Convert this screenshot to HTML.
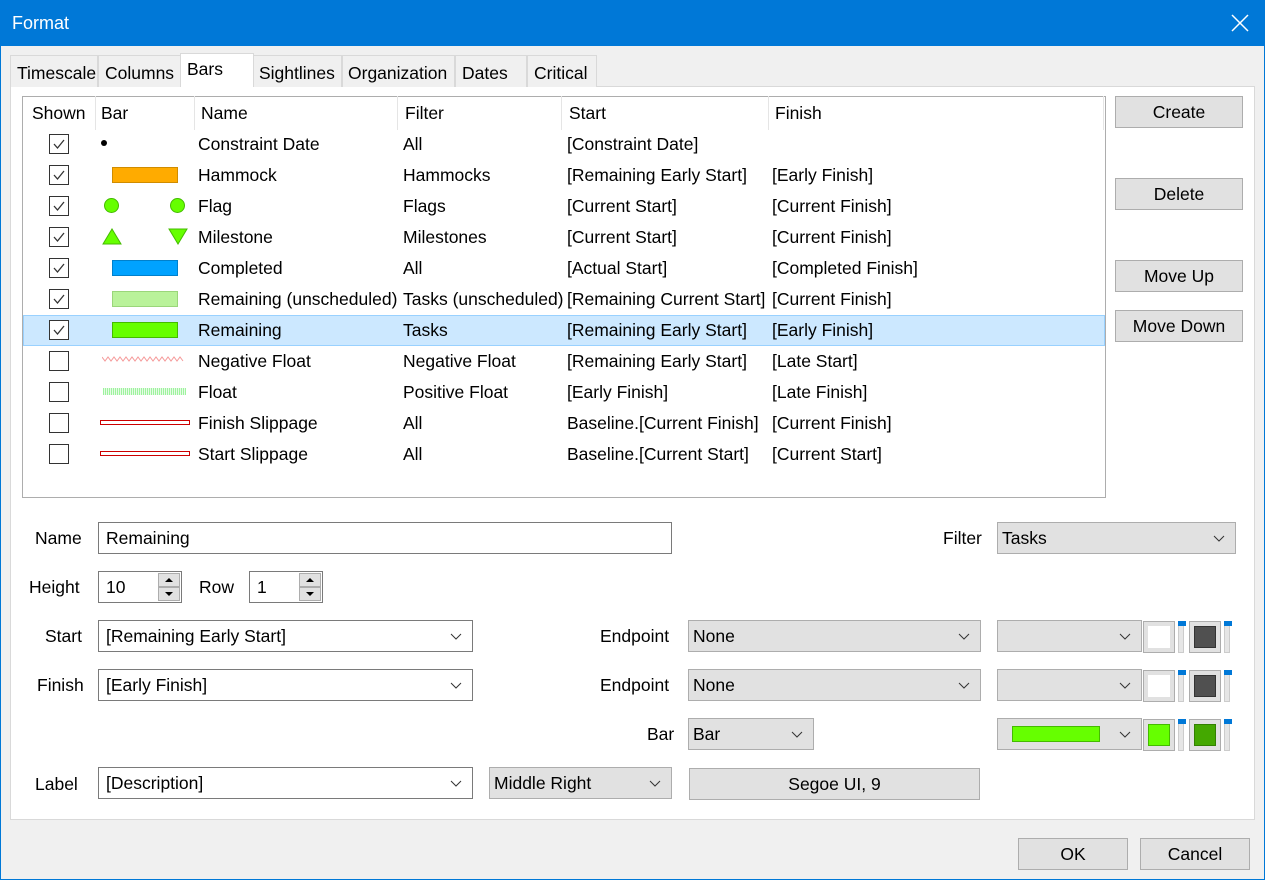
<!DOCTYPE html>
<html><head><style>
*{box-sizing:border-box;margin:0;padding:0}
body{width:1265px;height:880px;background:#f0f0f0;font-family:"Liberation Sans",sans-serif;font-size:17.5px;color:#000;position:relative;overflow:hidden}
.a{position:absolute}
.win{left:0;top:0;width:1265px;height:880px;border:1px solid #0078d7}
.title{left:0;top:0;width:1265px;height:46px;background:#0078d7;color:#fff;font-size:18px;padding:13px 12px}
.tab{top:55px;height:32px;border:1px solid #d9d9d9;border-bottom:none;background:#f0f0f0;padding:7px 6px;font-size:17.5px;white-space:nowrap}
.panel{left:10px;top:86px;width:1245px;height:734px;background:#fff;border:1px solid #d9d9d9}
.list{left:22px;top:96px;width:1084px;height:402px;border:1px solid #adadad;background:#fff}
.hd{top:103px}
.sep{top:96px;width:1px;height:34px;background:#e5e5e5}
.cb{width:20px;height:20px;border:1px solid #333;background:#fff}
.btn{background:#e1e1e1;border:1px solid #adadad;text-align:center;padding-top:5px}
.inp{background:#fff;border:1px solid #7a7a7a;padding:5px 7px;height:32px}
.dd{background:#e1e1e1;border:1px solid #adadad;padding:5px 4px;height:32px}
.ddw{background:#fff;border:1px solid #7a7a7a;padding:5px 7px;height:32px}
.chev{position:absolute;right:10px;top:9px;width:12px;height:12px}
.sw{width:32px;height:32px;border:1px solid #adadad;background:#e1e1e1}
.sw i{position:absolute;left:4px;top:4px;width:22px;height:22px}
.sl{width:6px;height:32px;background:#e6e6e6;border:1px solid #ccc}
.sl i{position:absolute;left:-1px;top:-1px;width:8px;height:5px;background:#0078d7}
.col{top:129px;line-height:31px;white-space:nowrap}
</style></head><body>
<div class="a win"></div>
<div class="a title">Format</div>
<svg class="a" style="left:1231px;top:14px" width="18" height="18"><path d="M1 1L17 17M17 1L1 17" stroke="#fff" stroke-width="1.5"/></svg>
<div class="a panel"></div>
<div class="a tab" style="left:10px;width:88px;padding-left:6px">Timescale</div>
<div class="a tab" style="left:98px;width:83px;padding-left:6px">Columns</div>
<div class="a tab" style="left:253px;width:89px;padding-left:5px">Sightlines</div>
<div class="a tab" style="left:342px;width:113px;padding-left:5px">Organization</div>
<div class="a tab" style="left:455px;width:72px">Dates</div>
<div class="a tab" style="left:527px;width:70px">Critical</div>
<div class="a tab" style="left:180px;top:53px;width:74px;height:34px;background:#fff;padding-top:5px">Bars</div>
<div class="a list"></div>
<div class="a hd" style="left:32px">Shown</div>
<div class="a hd" style="left:101px">Bar</div>
<div class="a hd" style="left:201px">Name</div>
<div class="a hd" style="left:405px">Filter</div>
<div class="a hd" style="left:569px">Start</div>
<div class="a hd" style="left:775px">Finish</div>
<div class="a sep" style="left:95px"></div><div class="a sep" style="left:194px"></div><div class="a sep" style="left:397px"></div><div class="a sep" style="left:561px"></div><div class="a sep" style="left:768px"></div><div class="a sep" style="left:1103px"></div>
<div class="a" style="left:23px;top:315px;width:1082px;height:31px;background:#cce8ff;border:1px solid #99d1ff"></div>

<div class="a cb" style="left:49px;top:134px"></div><svg class="a" style="left:52px;top:137px" width="14" height="14"><path d="M2 7L5.5 11L12 3" stroke="#333" fill="none" stroke-width="1.3"/></svg>
<div class="a cb" style="left:49px;top:165px"></div><svg class="a" style="left:52px;top:168px" width="14" height="14"><path d="M2 7L5.5 11L12 3" stroke="#333" fill="none" stroke-width="1.3"/></svg>
<div class="a cb" style="left:49px;top:196px"></div><svg class="a" style="left:52px;top:199px" width="14" height="14"><path d="M2 7L5.5 11L12 3" stroke="#333" fill="none" stroke-width="1.3"/></svg>
<div class="a cb" style="left:49px;top:227px"></div><svg class="a" style="left:52px;top:230px" width="14" height="14"><path d="M2 7L5.5 11L12 3" stroke="#333" fill="none" stroke-width="1.3"/></svg>
<div class="a cb" style="left:49px;top:258px"></div><svg class="a" style="left:52px;top:261px" width="14" height="14"><path d="M2 7L5.5 11L12 3" stroke="#333" fill="none" stroke-width="1.3"/></svg>
<div class="a cb" style="left:49px;top:289px"></div><svg class="a" style="left:52px;top:292px" width="14" height="14"><path d="M2 7L5.5 11L12 3" stroke="#333" fill="none" stroke-width="1.3"/></svg>
<div class="a cb" style="left:49px;top:320px"></div><svg class="a" style="left:52px;top:323px" width="14" height="14"><path d="M2 7L5.5 11L12 3" stroke="#333" fill="none" stroke-width="1.3"/></svg>
<div class="a cb" style="left:49px;top:351px"></div>
<div class="a cb" style="left:49px;top:382px"></div>
<div class="a cb" style="left:49px;top:413px"></div>
<div class="a cb" style="left:49px;top:444px"></div>

<div class="a" style="left:101px;top:140px;width:6px;height:6px;border-radius:50%;background:#000"></div>
<div class="a" style="left:112px;top:167px;width:66px;height:16px;background:#ffab00;border:1px solid #d08c00"></div>
<div class="a" style="left:104px;top:198px;width:15px;height:15px;border-radius:50%;background:#66ff00;border:1px solid #44bb00"></div>
<div class="a" style="left:170px;top:198px;width:15px;height:15px;border-radius:50%;background:#66ff00;border:1px solid #44bb00"></div>
<svg class="a" style="left:102px;top:228px" width="86" height="18"><path d="M1 16L10 1L19 16Z" fill="#66ff00" stroke="#44bb00"/><path d="M67 1L85 1L76 16Z" fill="#66ff00" stroke="#44bb00"/></svg>
<div class="a" style="left:112px;top:260px;width:66px;height:16px;background:#00a2ff;border:1px solid #0080cc"></div>
<div class="a" style="left:112px;top:291px;width:66px;height:16px;background:#b9f29a;border:1px solid #9ad67a"></div>
<div class="a" style="left:112px;top:322px;width:66px;height:16px;background:#66ff00;border:1px solid #44bb00"></div>
<svg class="a" style="left:102px;top:355px" width="86" height="8"><path d="M0 2 l3 4 l3 -4 l3 4 l3 -4 l3 4 l3 -4 l3 4 l3 -4 l3 4 l3 -4 l3 4 l3 -4 l3 4 l3 -4 l3 4 l3 -4 l3 4 l3 -4 l3 4 l3 -4 l3 4 l3 -4 l3 4 l3 -4 l3 4 l3 -4 l3 4" stroke="#f59a9a" fill="none"/></svg>
<div class="a" style="left:103px;top:388px;width:83px;height:7px;background:repeating-linear-gradient(90deg,#9ef39e 0 1px,#e6fbe6 1px 2px)"></div>
<div class="a" style="left:100px;top:420px;width:90px;height:5px;border:1px solid #cc0000;background:#fff"></div>
<div class="a" style="left:100px;top:451px;width:90px;height:5px;border:1px solid #cc0000;background:#fff"></div>

<div class="a col" style="left:198px">Constraint Date<br>Hammock<br>Flag<br>Milestone<br>Completed<br>Remaining (unscheduled)<br>Remaining<br>Negative Float<br>Float<br>Finish Slippage<br>Start Slippage</div>
<div class="a col" style="left:403px">All<br>Hammocks<br>Flags<br>Milestones<br>All<br>Tasks (unscheduled)<br>Tasks<br>Negative Float<br>Positive Float<br>All<br>All</div>
<div class="a col" style="left:567px">[Constraint Date]<br>[Remaining Early Start]<br>[Current Start]<br>[Current Start]<br>[Actual Start]<br>[Remaining Current Start]<br>[Remaining Early Start]<br>[Remaining Early Start]<br>[Early Finish]<br>Baseline.[Current Finish]<br>Baseline.[Current Start]</div>
<div class="a col" style="left:772px">&nbsp;<br>[Early Finish]<br>[Current Finish]<br>[Current Finish]<br>[Completed Finish]<br>[Current Finish]<br>[Early Finish]<br>[Late Start]<br>[Late Finish]<br>[Current Finish]<br>[Current Start]</div>

<div class="a btn" style="left:1115px;top:96px;width:128px;height:32px">Create</div>
<div class="a btn" style="left:1115px;top:178px;width:128px;height:32px">Delete</div>
<div class="a btn" style="left:1115px;top:260px;width:128px;height:32px">Move Up</div>
<div class="a btn" style="left:1115px;top:310px;width:128px;height:32px">Move Down</div>

<div class="a" style="left:35px;top:528px">Name</div>
<div class="a inp" style="left:98px;top:522px;width:574px">Remaining</div>
<div class="a" style="left:943px;top:528px">Filter</div>
<div class="a dd" style="left:997px;top:522px;width:239px">Tasks<svg class="chev" viewBox="0 0 12 12"><path d="M1 4L6 9L11 4" stroke="#333" fill="none"/></svg></div>

<div class="a" style="left:29px;top:577px">Height</div>
<div class="a inp" style="left:98px;top:571px;width:84px">10</div>
<div class="a btn" style="left:158px;top:573px;width:22px;height:14px;padding:0"></div><div class="a btn" style="left:158px;top:587px;width:22px;height:14px;padding:0"></div>
<svg class="a" style="left:164px;top:576px" width="10" height="22"><path d="M1 6L5 2L9 6Z M1 16L5 20L9 16Z" fill="#000"/></svg>
<div class="a" style="left:199px;top:577px">Row</div>
<div class="a inp" style="left:249px;top:571px;width:74px">1</div>
<div class="a btn" style="left:299px;top:573px;width:22px;height:14px;padding:0"></div><div class="a btn" style="left:299px;top:587px;width:22px;height:14px;padding:0"></div>
<svg class="a" style="left:305px;top:576px" width="10" height="22"><path d="M1 6L5 2L9 6Z M1 16L5 20L9 16Z" fill="#000"/></svg>

<div class="a" style="left:45px;top:626px">Start</div>
<div class="a ddw" style="left:98px;top:620px;width:375px">[Remaining Early Start]<svg class="chev" viewBox="0 0 12 12"><path d="M1 4L6 9L11 4" stroke="#333" fill="none"/></svg></div>
<div class="a" style="left:600px;top:626px">Endpoint</div>
<div class="a dd" style="left:688px;top:620px;width:293px">None<svg class="chev" viewBox="0 0 12 12"><path d="M1 4L6 9L11 4" stroke="#333" fill="none"/></svg></div>
<div class="a dd" style="left:997px;top:620px;width:145px"><svg class="chev" viewBox="0 0 12 12"><path d="M1 4L6 9L11 4" stroke="#333" fill="none"/></svg></div>
<div class="a sw" style="left:1143px;top:621px"><i style="background:#fff"></i></div>
<div class="a sl" style="left:1178px;top:621px"><i></i></div>
<div class="a sw" style="left:1189px;top:621px"><i style="background:#505050;border:1px solid #333"></i></div>
<div class="a sl" style="left:1224px;top:621px"><i></i></div>

<div class="a" style="left:37px;top:675px">Finish</div>
<div class="a ddw" style="left:98px;top:669px;width:375px">[Early Finish]<svg class="chev" viewBox="0 0 12 12"><path d="M1 4L6 9L11 4" stroke="#333" fill="none"/></svg></div>
<div class="a" style="left:600px;top:675px">Endpoint</div>
<div class="a dd" style="left:688px;top:669px;width:293px">None<svg class="chev" viewBox="0 0 12 12"><path d="M1 4L6 9L11 4" stroke="#333" fill="none"/></svg></div>
<div class="a dd" style="left:997px;top:669px;width:145px"><svg class="chev" viewBox="0 0 12 12"><path d="M1 4L6 9L11 4" stroke="#333" fill="none"/></svg></div>
<div class="a sw" style="left:1143px;top:670px"><i style="background:#fff"></i></div>
<div class="a sl" style="left:1178px;top:670px"><i></i></div>
<div class="a sw" style="left:1189px;top:670px"><i style="background:#505050;border:1px solid #333"></i></div>
<div class="a sl" style="left:1224px;top:670px"><i></i></div>

<div class="a" style="left:647px;top:724px">Bar</div>
<div class="a dd" style="left:688px;top:718px;width:126px">Bar<svg class="chev" viewBox="0 0 12 12"><path d="M1 4L6 9L11 4" stroke="#333" fill="none"/></svg></div>
<div class="a dd" style="left:997px;top:718px;width:145px"><div class="a" style="left:14px;top:7px;width:88px;height:16px;background:#66ff00;border:1px solid #44bb00"></div><svg class="chev" viewBox="0 0 12 12"><path d="M1 4L6 9L11 4" stroke="#333" fill="none"/></svg></div>
<div class="a sw" style="left:1143px;top:719px"><i style="background:#66ff00;border:1px solid #44bb00"></i></div>
<div class="a sl" style="left:1178px;top:719px"><i></i></div>
<div class="a sw" style="left:1189px;top:719px"><i style="background:#44a800;border:1px solid #338000"></i></div>
<div class="a sl" style="left:1224px;top:719px"><i></i></div>

<div class="a" style="left:35px;top:774px">Label</div>
<div class="a ddw" style="left:98px;top:767px;width:375px">[Description]<svg class="chev" viewBox="0 0 12 12"><path d="M1 4L6 9L11 4" stroke="#333" fill="none"/></svg></div>
<div class="a dd" style="left:489px;top:767px;width:183px">Middle Right<svg class="chev" viewBox="0 0 12 12"><path d="M1 4L6 9L11 4" stroke="#333" fill="none"/></svg></div>
<div class="a btn" style="left:689px;top:768px;width:291px;height:32px">Segoe UI, 9</div>

<div class="a btn" style="left:1018px;top:838px;width:110px;height:32px">OK</div>
<div class="a btn" style="left:1140px;top:838px;width:110px;height:32px">Cancel</div>
</body></html>
